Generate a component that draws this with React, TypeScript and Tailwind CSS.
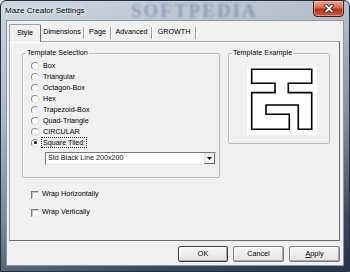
import React from 'react';

const templates = [
  'Box',
  'Triangular',
  'Octagon-Box',
  'Hex',
  'Trapezoid-Box',
  'Quad-Triangle',
  'CIRCULAR',
  'Square Tiled:',
];

const otherTabs = [
  { label: 'Dimensions', w: 'w-[44px]' },
  { label: 'Page', w: 'w-[27px]' },
  { label: 'Advanced', w: 'w-[41px]' },
  { label: 'GROWTH', w: 'w-[44px]' },
];

const Radio: React.FC<{ label: string; checked?: boolean }> = ({ label, checked }) => (
  <div className="flex items-center h-[11px] pl-[8px]">
    <span className="w-[8px] h-[8px] rounded-full bg-white border border-[#8c8c8c] border-r-[#e4e4e4] border-b-[#e4e4e4] flex items-center justify-center">
      {checked && <span className="w-[3px] h-[3px] rounded-full bg-black" />}
    </span>
    <span
      className={`ml-[2px] leading-[9px] px-[1px] ${
        checked ? 'border border-dotted border-[#333]' : 'border border-transparent'
      }`}
    >
      {label}
    </span>
  </div>
);

const Check: React.FC<{ label: string }> = ({ label }) => (
  <div className="flex items-center h-[13px] ml-[21px]">
    <span className="w-[8px] h-[8px] bg-white border border-[#7a7a7a] border-r-[#e8e8e8] border-b-[#e8e8e8] shadow-[inset_1px_1px_0_#c8c8c8]" />
    <span className="ml-[3px]">{label}</span>
  </div>
);

const Maze = () => (
  <svg width="70" height="69" viewBox="0 0 70 69" className="block">
    <rect width="70" height="69" fill="#fff" />
    <polygon
      points="4.7,3.3 64.7,3.3 64.7,17.3 41.3,17.3 41.3,26.6 64.7,26.6 64.7,63.3 51.3,63.3 51.3,39 19,39 19,48.3 42.3,48.3 42.3,63.3 4.7,63.3 4.7,26.6 28,26.6 28,17.3 4.7,17.3"
      fill="none"
      stroke="#000"
      strokeWidth="1.6"
    />
  </svg>
);

const Button: React.FC<{ w: string; dark?: boolean; children: React.ReactNode }> = ({ w, dark, children }) => (
  <div
    className={`${w} h-[16px] flex items-center justify-center rounded-[2px] border bg-[linear-gradient(#f6f6f6,#e2e2e2)] ${
      dark ? 'border-[#3f3f3f]' : 'border-[#7c7c7c]'
    } shadow-[inset_-1px_-1px_0_#a8a8a8,inset_1px_1px_0_#fff]`}
  >
    {children}
  </div>
);

export default function App() {
  return (
    <div className="w-[350px] h-[272px] overflow-hidden bg-white font-['Liberation_Sans',Arial,sans-serif] text-[7.2px] text-black">
      <div className="relative w-[350px] h-[272px] flex flex-col rounded-t-[6px] border border-[#27303e] bg-[linear-gradient(165deg,#cdd6df_0%,#b0bcc8_30%,#7d8a9b_60%,#3b4960_85%,#26344a_100%)]">
        {/* title bar */}
        <div className="relative h-[19px] flex items-start justify-between">
          <span className="ml-[4px] mt-[5px] text-[8px] leading-[10px] [text-shadow:0_0_5px_#fff,0_0_3px_#fff]">
            Maze Creator Settings
          </span>
          <span className="absolute left-[130px] top-[-4px] text-[19px] font-bold tracking-[2px] text-[#1e3f78]/30 blur-[1px] font-['Liberation_Serif',serif]">
            SOFTPEDIA
          </span>
          <div className="relative mr-[5px] -mt-px w-[31px] h-[17px] rounded-b-[4px] border border-[#4b1c16] bg-[linear-gradient(#e9a797,#d46a52_45%,#b5301c_55%,#cf5a40)] shadow-[inset_0_0_0_1px_rgba(255,255,255,0.35)] flex items-center justify-center">
            <svg width="10" height="9" viewBox="0 0 10 9">
              <path d="M2 1.5 L8 7.5 M8 1.5 L2 7.5" stroke="#3b1410" strokeWidth="3.4" strokeLinecap="round" />
              <path d="M2 1.5 L8 7.5 M8 1.5 L2 7.5" stroke="#fff" strokeWidth="1.8" strokeLinecap="round" />
            </svg>
          </div>
        </div>

        {/* client area */}
        <div className="ml-[5px] w-[338px] h-[246px] bg-[#f0f0f0] border border-[#8a95a1] flex flex-col">
          {/* tabs */}
          <div className="ml-[2px] mt-[3px] flex items-end h-[17px]">
            <div className="relative z-10 -mb-px w-[32px] h-[18px] border border-b-0 border-[#a0a0a0] border-r-[#6a6a6a] rounded-t-[2px] bg-[#f0f0f0] flex items-center justify-center">
              Style
            </div>
            {otherTabs.map(t => (
              <div key={t.label} className={`${t.w} h-[17px] flex items-center`}>
                <span className="flex-1 text-center">{t.label}</span>
                <span className="w-[2px] h-[12px] border-l border-[#a0a0a0] border-r border-r-white" />
              </div>
            ))}
          </div>

          {/* tab panel */}
          <div className="ml-[2px] w-[331px] h-[200px] border border-[#a0a0a0] border-r-[#6a6a6a] border-b-[#6a6a6a] shadow-[inset_1px_1px_0_#fff]">
            <div className="flex items-start">
              <fieldset className="ml-[12px] mt-[6px] w-[198px] h-[130px] border border-[#bcbcbc] rounded-[2px] shadow-[inset_1px_1px_0_#fff]">
                <legend className="ml-[3px] px-[1px] leading-[10px]">Template Selection</legend>
                <div className="pt-[2px]">
                  {templates.map((t, i) => (
                    <Radio key={t} label={t} checked={i === templates.length - 1} />
                  ))}
                </div>
                <div className="ml-[22px] mt-[4px] w-[171px] h-[13px] bg-white border border-[#7a7a7a] border-r-[#e6e6e6] border-b-[#e6e6e6] flex items-center">
                  <span className="flex-1 pl-[2px] text-[#111]">Std Black Line 200x200</span>
                  <div className="w-[11px] h-[11px] bg-[#f0f0f0] border border-[#e0e0e0] border-r-[#6a6a6a] border-b-[#6a6a6a] flex items-center justify-center">
                    <svg width="5" height="3" viewBox="0 0 5 3">
                      <path d="M0 0 H5 L2.5 3 Z" fill="#000" />
                    </svg>
                  </div>
                </div>
              </fieldset>

              <fieldset className="ml-[8px] mt-[6px] w-[102px] h-[96px] border border-[#bcbcbc] rounded-[2px] shadow-[inset_1px_1px_0_#fff]">
                <legend className="ml-[3px] px-[1px] leading-[10px]">Template Example</legend>
                <div className="ml-[18px] mt-[8px]">
                  <Maze />
                </div>
              </fieldset>
            </div>

            <div className="mt-[10px] flex flex-col gap-[5px]">
              <Check label="Wrap Horizontally" />
              <Check label="Wrap Vertically" />
            </div>
          </div>

          {/* buttons */}
          <div className="mt-[5px] pr-[3px] flex justify-end gap-[5px]">
            <Button w="w-[50px]" dark>
              OK
            </Button>
            <Button w="w-[51px]">Cancel</Button>
            <Button w="w-[51px]">
              <span>
                <span className="underline">A</span>pply
              </span>
            </Button>
          </div>
        </div>
      </div>
    </div>
  );
}
